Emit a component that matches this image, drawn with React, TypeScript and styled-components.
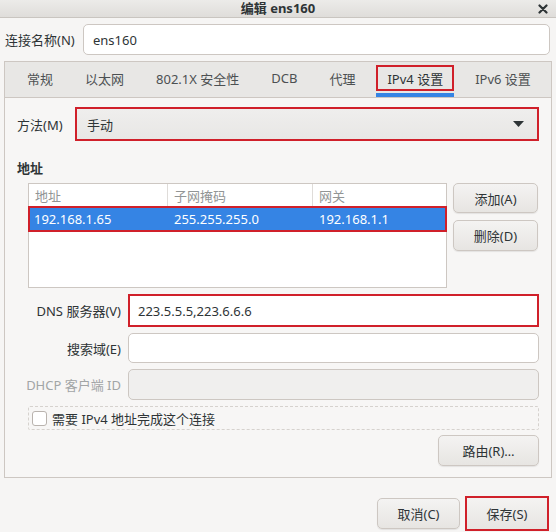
import React from 'react'
import styled, { createGlobalStyle, css } from 'styled-components'

const RED = '#d0202a'
const BORDER = '#cdc7c2'

const GlobalStyle = createGlobalStyle`
  html, body {
    margin: 0;
    padding: 0;
    background: #f6f5f4;
  }
  body {
    font-family: "Noto Sans", "Noto Sans CJK SC", sans-serif;
    font-size: 13px;
    color: #2e3436;
  }
  * {
    box-sizing: border-box;
  }
`

const redFrame = css`
  border: 2px solid ${RED};
`

const Window = styled.div`
  width: 556px;
  height: 532px;
  overflow: hidden;
  background: #f6f5f4;
  display: flex;
  flex-direction: column;
`

const TitleBar = styled.div`
  flex: none;
  height: 18px;
  display: grid;
  grid-template-columns: 1fr auto 1fr;
  align-items: center;
  background: linear-gradient(#ecebe9, #dfddda);
  border-bottom: 1px solid #c9c5c0;
`

const Title = styled.div`
  grid-column: 2;
  font-weight: bold;
  font-size: 13px;
  line-height: 17px;
  color: #2e3436;
`

const CloseButton = styled.div`
  justify-self: end;
  display: flex;
  align-items: center;
  padding-right: 8px;
`

const NameRow = styled.div`
  display: grid;
  grid-template-columns: 78px 1fr;
  align-items: center;
  padding: 6px 6px 0 5px;
`

const Label = styled.div<{ $align?: 'left' | 'right'; $muted?: boolean }>`
  text-align: ${({ $align }) => $align ?? 'left'};
  color: ${({ $muted }) => ($muted ? '#a2a5a6' : '#2e3436')};
  white-space: nowrap;
`

const Entry = styled.div<{ $height?: number; $highlight?: boolean; $disabled?: boolean }>`
  height: ${({ $height }) => $height ?? 31}px;
  display: flex;
  align-items: center;
  padding-left: 9px;
  background: ${({ $disabled }) => ($disabled ? '#f0efee' : '#ffffff')};
  border: 1px solid ${BORDER};
  border-radius: 5px;
  color: #2e3436;
  ${({ $highlight }) =>
    $highlight &&
    css`
      ${redFrame};
      border-radius: 0;
      padding-left: 8px;
    `}
`

const Notebook = styled.div`
  margin: 6px 4px 0 4px;
  border: 1px solid ${BORDER};
  display: flex;
  flex-direction: column;
`

const TabBar = styled.div`
  height: 36px;
  display: flex;
  padding-left: 6px;
  background: #e8e7e5;
  border-bottom: 1px solid ${BORDER};
`

const Tab = styled.div<{ $active?: boolean }>`
  display: flex;
  flex-direction: column;
  align-items: stretch;
  margin: 0 5px;
  color: ${({ $active }) => ($active ? '#2e3436' : '#4c5052')};
`

const TabLabel = styled.div<{ $highlight?: boolean }>`
  height: 26px;
  margin-top: 3px;
  padding: 0 9px;
  display: flex;
  align-items: center;
  justify-content: center;
  white-space: nowrap;
  border: 2px solid ${({ $highlight }) => ($highlight ? RED : 'transparent')};
`

const TabUnderline = styled.div<{ $active?: boolean }>`
  height: 4px;
  margin-top: 2px;
  background: ${({ $active }) => ($active ? '#3584e4' : 'transparent')};
`

const Page = styled.div`
  display: flex;
  flex-direction: column;
  padding: 9px 12px 11px 12px;
  background: #f7f6f5;
`

const MethodRow = styled.div`
  display: grid;
  grid-template-columns: 58px 1fr;
  align-items: center;
`

const Combo = styled.div`
  height: 34px;
  display: flex;
  align-items: center;
  justify-content: space-between;
  padding: 0 13px 0 10px;
  background: linear-gradient(#efeeed, #e8e7e5);
  ${redFrame};
`

const SectionTitle = styled.div`
  margin-top: 19px;
  font-weight: bold;
  line-height: 16px;
`

const AddressRow = styled.div`
  display: grid;
  grid-template-columns: 419px 85px;
  column-gap: 6px;
  margin: 7px 0 0 11px;
`

const Table = styled.div`
  height: 105px;
  background: #ffffff;
  border: 1px solid ${BORDER};
`

const HeaderRow = styled.div`
  display: grid;
  grid-template-columns: 139px 145px 1fr;
  height: 22px;
`

const HeaderCell = styled.div<{ $last?: boolean }>`
  display: flex;
  align-items: center;
  padding-left: 6px;
  color: #929595;
  border-right: ${({ $last }) => ($last ? 'none' : '1px solid #dfdcd9')};
`

const SelectedRow = styled.div`
  display: grid;
  grid-template-columns: 140px 145px 1fr;
  height: 26px;
  margin: 0 -1px;
  background: #3584e4;
  color: #ffffff;
  ${redFrame};
`

const Cell = styled.div`
  display: flex;
  align-items: center;
  padding-left: 4px;
`

const ButtonColumn = styled.div`
  display: flex;
  flex-direction: column;
  gap: 7px;
`

const Button = styled.div<{ $width?: number; $height?: number; $highlight?: boolean }>`
  width: ${({ $width }) => ($width ? `${$width}px` : 'auto')};
  height: ${({ $height }) => $height ?? 31}px;
  display: flex;
  align-items: center;
  justify-content: center;
  color: #2e3436;
  background: linear-gradient(#f4f3f2, #e7e5e2);
  border: 1px solid ${BORDER};
  border-radius: 5px;
  box-shadow: 0 1px 1px rgba(0, 0, 0, 0.08);
  ${({ $highlight }) =>
    $highlight &&
    css`
      ${redFrame};
      border-radius: 0;
      box-shadow: none;
    `}
`

const FormGrid = styled.div`
  display: grid;
  grid-template-columns: 104px 1fr;
  column-gap: 7px;
  row-gap: 6px;
  align-items: center;
  margin-top: 6px;
`

const CheckRow = styled.div`
  height: 24px;
  margin: 6px 0 0 11px;
  display: flex;
  align-items: center;
  gap: 5px;
  padding-left: 3px;
  border: 1px dashed #d6d2ce;
  border-radius: 2px;
`

const CheckBox = styled.div`
  width: 15px;
  height: 15px;
  background: #ffffff;
  border: 1px solid #b9b3ae;
  border-radius: 3px;
`

const RouteRow = styled.div`
  display: flex;
  justify-content: flex-end;
  margin-top: 5px;
`

const Footer = styled.div`
  display: flex;
  justify-content: flex-end;
  align-items: center;
  gap: 5px;
  padding: 18px 7px 0 0;
`

function CloseIcon() {
  return (
    <svg width="10" height="10" viewBox="0 0 10 10">
      <path d="M1.5 1.5 L8.5 8.5 M8.5 1.5 L1.5 8.5" stroke="#2e3436" strokeWidth="2.2" strokeLinecap="round" />
    </svg>
  )
}

function ArrowDown() {
  return (
    <svg width="11" height="6" viewBox="0 0 11 6">
      <polygon points="0,0 11,0 5.5,6" fill="#2e3436" />
    </svg>
  )
}

const tabs = ['常规', '以太网', '802.1X 安全性', 'DCB', '代理', 'IPv4 设置', 'IPv6 设置']
const activeTab = 'IPv4 设置'

export default function App() {
  return (
    <Window>
      <GlobalStyle />
      <TitleBar>
        <Title>编辑 ens160</Title>
        <CloseButton>
          <CloseIcon />
        </CloseButton>
      </TitleBar>

      <NameRow>
        <Label>连接名称(N)</Label>
        <Entry>ens160</Entry>
      </NameRow>

      <Notebook>
        <TabBar>
          {tabs.map((name) => (
            <Tab key={name} $active={name === activeTab}>
              <TabLabel $highlight={name === activeTab}>{name}</TabLabel>
              <TabUnderline $active={name === activeTab} />
            </Tab>
          ))}
        </TabBar>

        <Page>
          <MethodRow>
            <Label>方法(M)</Label>
            <Combo>
              <span>手动</span>
              <ArrowDown />
            </Combo>
          </MethodRow>

          <SectionTitle>地址</SectionTitle>
          <AddressRow>
            <Table>
              <HeaderRow>
                <HeaderCell>地址</HeaderCell>
                <HeaderCell>子网掩码</HeaderCell>
                <HeaderCell $last>网关</HeaderCell>
              </HeaderRow>
              <SelectedRow>
                <Cell>192.168.1.65</Cell>
                <Cell>255.255.255.0</Cell>
                <Cell>192.168.1.1</Cell>
              </SelectedRow>
            </Table>
            <ButtonColumn>
              <Button $height={30}>添加(A)</Button>
              <Button>删除(D)</Button>
            </ButtonColumn>
          </AddressRow>

          <FormGrid>
            <Label $align="right">DNS 服务器(V)</Label>
            <Entry $height={33} $highlight>
              223.5.5.5,223.6.6.6
            </Entry>
            <Label $align="right">搜索域(E)</Label>
            <Entry $height={30} />
            <Label $align="right" $muted>
              DHCP 客户端 ID
            </Label>
            <Entry $disabled />
          </FormGrid>

          <CheckRow>
            <CheckBox />
            <span>需要 IPv4 地址完成这个连接</span>
          </CheckRow>

          <RouteRow>
            <Button $width={101}>路由(R)…</Button>
          </RouteRow>
        </Page>
      </Notebook>

      <Footer>
        <Button $width={83} $height={31}>
          取消(C)
        </Button>
        <Button $width={84} $height={35} $highlight>
          保存(S)
        </Button>
      </Footer>
    </Window>
  )
}
